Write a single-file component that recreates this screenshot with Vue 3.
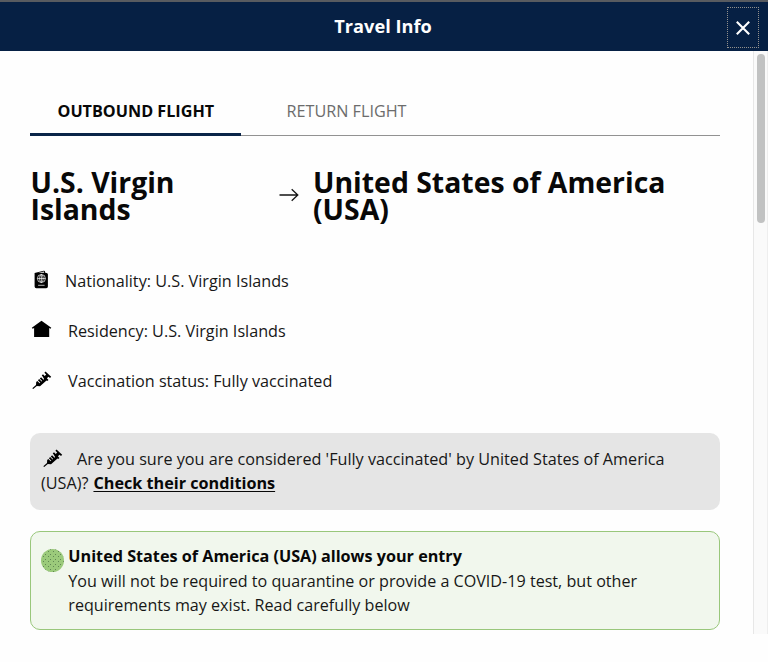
<script setup>
const details = [
  { icon: 'passport', text: 'Nationality: U.S. Virgin Islands' },
  { icon: 'home', text: 'Residency: U.S. Virgin Islands' },
  { icon: 'syringe', text: 'Vaccination status: Fully vaccinated' },
]
const syringe =
  'M13.5 0.6 L19.2 5.8 L18 7 L16.5 5.8 L14.9 7.2 L16.5 8.9 L15.2 10 L14.5 9.4 L8 15.2 L4.8 15 L1.2 18 L0.3 17.2 L4 13.9 L4.2 10.9 L5.3 9.9 L7.7 12.3 L8.3 11.7 L5.9 9.3 L7.2 8.1 L9.6 10.5 L10.2 9.9 L7.8 7.5 L9.1 6.3 L11.5 8.7 L12.1 8.1 L10.3 5.1 L9.7 4.4 L11 3.3 L12.7 5 L14.2 3.6 L12.4 1.8 Z'
</script>

<template>
  <div class="dialog">
    <header class="bar">
      <h1 class="title">Travel Info</h1>
      <button class="close" aria-label="Close">
        <svg width="16" height="16" viewBox="0 0 16 16"><path d="M1.8 1.8 14.2 14.2M14.2 1.8 1.8 14.2" /></svg>
      </button>
    </header>
    <div class="body">
      <main class="content">
        <nav class="tabs">
          <a class="tab active">OUTBOUND FLIGHT</a>
          <a class="tab">RETURN FLIGHT</a>
        </nav>
        <section class="route">
          <h2 class="from">U.S. Virgin<br />Islands</h2>
          <svg class="arrow" width="20" height="14" viewBox="0 0 20 14"><path d="M.5 7H18.8M12.7 1.2 18.8 7 12.7 12.8" /></svg>
          <h2>United States of America<br />(USA)</h2>
        </section>
        <ul class="details">
          <li v-for="d in details" :key="d.icon" :class="d.icon">
            <svg v-if="d.icon === 'passport'" width="22" height="20" viewBox="-.6 0.5 22 20">
              <path d="M4 3.6 13.1 1.2Q14.4 1 14.5 2.3V3.2Q17.3 3 17.3 4.8V17Q17.3 18.7 15.6 18.7H5.7Q4 18.7 4 17Z" />
              <path d="M7.5 3.2 13.5 1.9V3.2Z" fill="#fff" />
              <g fill="none" stroke="#fff" stroke-width=".7">
                <circle cx="10.8" cy="9" r="4" />
                <ellipse cx="10.8" cy="9" rx="1.8" ry="4" />
                <path d="M6.8 9H14.8M10.8 5V13M7.5 15.8H14" />
              </g>
            </svg>
            <svg v-else-if="d.icon === 'home'" width="22" height="20" viewBox="-.7 0.5 22 20">
              <path d="M10.8 1.2 20.6 8.3 19.9 9.2 18.5 8.6V17.5H3.4V8.6L1.9 9.2 1.1 8.3Z" />
            </svg>
            <svg v-else width="22" height="20" viewBox="-2 0 22 20"><path :d="syringe" /></svg>
            <span>{{ d.text }}</span>
          </li>
        </ul>
        <section class="notice">
          <svg width="22" height="20" viewBox="-2 0 22 20"><path :d="syringe" /></svg>
          <span class="question">Are you sure you are considered 'Fully vaccinated' by United States of America</span><br />
          (USA)? <a>Check their conditions</a>
        </section>
        <section class="entry">
          <i class="dot"></i>
          <div>
            <strong>United States of America (USA) allows your entry</strong>
            <p>You will not be required to quarantine or provide a COVID-19 test, but other<br />requirements may exist. Read carefully below</p>
          </div>
        </section>
      </main>
      <div class="track"><div class="thumb"></div></div>
    </div>
  </div>
</template>

<style>
body { margin: 0; background: #fefefe; }
</style>

<style scoped>
.dialog { width: 768px; height: 662px; overflow: hidden; background: #fefefe; color: #171717; font: 16.2px/24.3px "Open Sans", sans-serif; }
.dialog * { box-sizing: border-box; }
h1, h2, p, ul { margin: 0; padding: 0; }
.bar { height: 51px; border-top: 2px solid #585b60; background: #062044; display: grid; grid-template-columns: 60px 1fr 60px; align-items: center; }
.title { grid-column: 2; color: #fff; text-align: center; font-size: 18.2px; line-height: 24px; padding: 0 2px 1px 0; }
.close { width: 32px; height: 41px; margin: 2px 0 0 19px; padding: 1px 0 0; background: transparent; border: 1px dotted #92908c; display: flex; align-items: center; justify-content: center; }
.close path { stroke: #fff; stroke-width: 2.1; fill: none; }
.body { display: flex; height: 583px; }
.content { width: 753px; padding: 38px 33px 0 30px; }
.tabs { display: flex; height: 47px; border-bottom: 1px solid #929292; }
.tab { height: 47px; padding: 10px 0 0 45.5px; color: #6c6c6c; font-size: 16.2px; }
.tab.active { width: 211px; padding-left: 27.5px; color: #080808; font-weight: 700; border-bottom: 3px solid #0a2548; }
.route { display: flex; height: 54px; margin-top: 33px; }
.route h2 { font-size: 28.4px; line-height: 27px; color: #080808; white-space: nowrap; }
.route .from { width: 249px; padding-left: .5px; }
.arrow { margin: 19px 14px 0 0; }
.arrow path { fill: none; stroke: #151515; stroke-width: 1.3; }
.details { list-style: none; margin-top: 45.5px; }
.details li { display: flex; height: 50.3px; gap: 16px; }
.details .passport { gap: 13px; }
.details svg { flex: none; margin-top: 1.5px; }
.notice { height: 77px; margin-top: 13.6px; padding: 14px 11px; border-radius: 10px; background: #e5e5e5; white-space: nowrap; }
.notice svg { vertical-align: -4px; }
.question { margin-left: 14px; }
.notice a { margin-left: .8px; font-weight: 700; color: #080808; text-decoration: underline; text-underline-offset: 2px; text-decoration-thickness: 1px; }
.entry { display: flex; height: 99px; margin-top: 21px; padding: 12.4px 10px; border: 1px solid #99c77b; border-radius: 10px; background: #f1f7ed; white-space: nowrap; }
.entry p { font-size: 16.14px; }
.dot { flex: none; width: 23px; height: 23px; margin: 5px 4.3px 0 0; border-radius: 50%; background-color: #9bca7b; background-image: radial-gradient(circle, #5f8752 .6px, transparent .9px), radial-gradient(circle, #5f8752 .6px, transparent .9px); background-size: 5px 5px; background-position: 0 0, 2px 3px; }
.entry strong { display: block; color: #080808; }
.track { width: 15px; padding: 3px 3px 0; border-left: 1px solid #e7e7e7; border-right: 1px solid #eee; background: #fafafa; }
.thumb { width: 8px; height: 169px; border-radius: 4px; background: #c1c2c2; }
</style>
